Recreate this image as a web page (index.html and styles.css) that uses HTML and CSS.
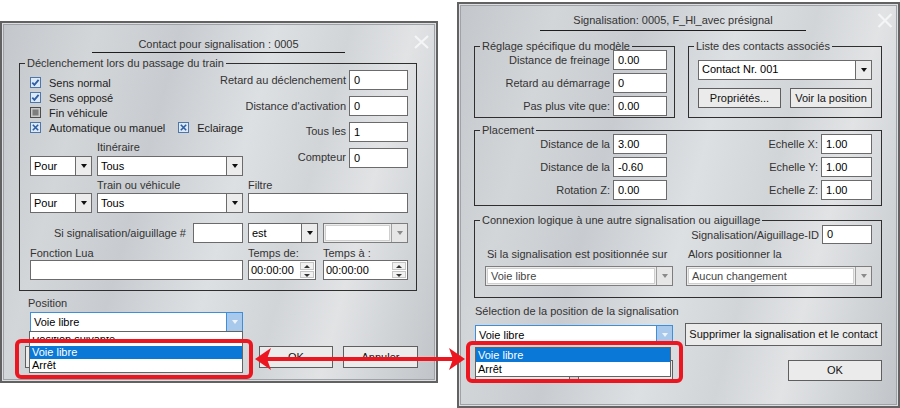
FILE: index.html
```html
<!DOCTYPE html>
<html lang="fr">
<head>
    <meta charset="UTF-8">
    <title>Contact pour signalisation</title>
    <link rel="stylesheet" href="styles.css">
</head>
<body>
    <!-- fenêtre de gauche : contact -->
    <div class="dlg dlg_contact">
        <div class="dlg_title">Contact pour signalisation : 0005</div>
        <svg class="close" width="17" height="14" viewBox="0 0 17 14"><path d="M2 1L15 13M15 1L2 13" stroke="#f4f5f6" stroke-width="2.2" fill="none"/></svg>

        <fieldset class="grp g_trigger">
            <legend>Déclenchement lors du passage du train</legend>
            <div class="trig_in">
                <div class="trig_top">
                    <div class="trig_left">
                        <div class="checks">
                            <div class="chk">
                                <svg width="11" height="11"><rect x=".5" y=".5" width="10" height="10" fill="#dce9f7" stroke="#4f76ab"/><path d="M2.3 5.6l2.1 2.2 4.2-5" stroke="#2d5ea6" stroke-width="1.8" fill="none"/></svg>
                                <span>Sens normal</span>
                            </div>
                            <div class="chk">
                                <svg width="11" height="11"><rect x=".5" y=".5" width="10" height="10" fill="#dce9f7" stroke="#4f76ab"/><path d="M2.3 5.6l2.1 2.2 4.2-5" stroke="#2d5ea6" stroke-width="1.8" fill="none"/></svg>
                                <span>Sens opposé</span>
                            </div>
                            <div class="chk">
                                <svg width="11" height="11"><rect x=".5" y=".5" width="10" height="10" fill="#c9c9c9" stroke="#4c4c4c"/><rect x="2.5" y="2.5" width="6" height="6" fill="#7d7d7d"/></svg>
                                <span>Fin véhicule</span>
                            </div>
                            <div class="chk_row">
                                <div class="chk chk_wide">
                                    <svg width="11" height="11"><rect x=".5" y=".5" width="10" height="10" fill="#dce9f7" stroke="#4f76ab"/><path d="M2.8 2.8l5.4 5.4M8.2 2.8l-5.4 5.4" stroke="#2d5ea6" stroke-width="1.6" fill="none"/></svg>
                                    <span>Automatique ou manuel</span>
                                </div>
                                <div class="chk">
                                    <svg width="11" height="11"><rect x=".5" y=".5" width="10" height="10" fill="#dce9f7" stroke="#4f76ab"/><path d="M2.8 2.8l5.4 5.4M8.2 2.8l-5.4 5.4" stroke="#2d5ea6" stroke-width="1.6" fill="none"/></svg>
                                    <span>Eclairage</span>
                                </div>
                            </div>
                        </div>
                        <div class="lbl lbl_itin">Itinéraire</div>
                        <div class="pair">
                            <div class="combo w62"><span class="val">Pour</span><span class="drop"><i class="tri"></i></span></div>
                            <div class="combo w146"><span class="val">Tous</span><span class="drop"><i class="tri"></i></span></div>
                        </div>
                    </div>
                    <div class="trig_right">
                        <div class="frow"><span>Retard au déclenchement</span><div class="edit w59">0</div></div>
                        <div class="frow"><span>Distance d'activation</span><div class="edit w59">0</div></div>
                        <div class="frow"><span class="lbl_up">Tous les</span><div class="edit w59">1</div></div>
                        <div class="frow"><span class="lbl_up">Compteur</span><div class="edit w59">0</div></div>
                    </div>
                </div>

                <div class="trig_grid">
                    <div class="lbl c2">Train ou véhicule</div>
                    <div class="lbl c34">Filtre</div>

                    <div class="combo"><span class="val">Pour</span><span class="drop"><i class="tri"></i></span></div>
                    <div class="combo"><span class="val">Tous</span><span class="drop"><i class="tri"></i></span></div>
                    <div class="edit c34"></div>

                    <div class="frow c12 frow_end"><span>Si signalisation/aiguillage #</span><div class="edit w50 gap7"></div></div>
                    <div class="combo"><span class="val">est</span><span class="drop"><i class="tri"></i></span></div>
                    <div class="combo off"><span class="val"></span><span class="drop"><i class="tri"></i></span></div>

                    <div class="lbl c12">Fonction Lua</div>
                    <div class="lbl">Temps de:</div>
                    <div class="lbl">Temps à :</div>

                    <div class="edit c12"></div>
                    <div class="spin w68"><span class="val">00:00:00</span><span class="arrows"><i class="up"></i><i class="dn"></i></span></div>
                    <div class="spin"><span class="val">00:00:00</span><span class="arrows"><i class="up"></i><i class="dn"></i></span></div>
                </div>
            </div>
        </fieldset>

        <div class="lbl pos_lbl">Position</div>
        <div class="combo focus pos_combo"><span class="val">Voie libre</span><span class="drop"><i class="tri"></i></span></div>

        <div class="btn_row">
            <div class="btn b_hidden"></div>
            <div class="btn b_ok">OK</div>
            <div class="btn b_cancel">Annuler</div>
        </div>

        <div class="droplist dl_contact">
            <div class="item cut"><span>Position suivante</span></div>
            <div class="item sel">Voie libre</div>
            <div class="item">Arrêt</div>
        </div>
    </div>

    <!-- fenêtre de droite : signalisation -->
    <div class="dlg dlg_signal">
        <div class="dlg_title">Signalisation: 0005, F_Hl_avec présignal</div>
        <svg class="close" width="16" height="15" viewBox="0 0 16 15"><path d="M1.5 1L14.5 14M14.5 1L1.5 14" stroke="#f4f5f6" stroke-width="2.2" fill="none"/></svg>

        <div class="sig_top">
            <fieldset class="grp g_model">
                <legend>Réglage spécifique du modèle</legend>
                <div class="rows r_model">
                    <div class="frow"><span>Distance de freinage</span><div class="edit w54">0.00</div></div>
                    <div class="frow"><span>Retard au démarrage</span><div class="edit w54">0</div></div>
                    <div class="frow"><span>Pas plus vite que:</span><div class="edit w54">0.00</div></div>
                </div>
            </fieldset>
            <fieldset class="grp g_list">
                <legend>Liste des contacts associés</legend>
                <div class="list_in">
                    <div class="combo h19 w174"><span class="val">Contact Nr. 001</span><span class="drop"><i class="tri"></i></span></div>
                    <div class="btn_pair">
                        <div class="btn b_props">Propriétés...</div>
                        <div class="btn b_view">Voir la position</div>
                    </div>
                </div>
            </fieldset>
        </div>

        <fieldset class="grp g_place">
            <legend>Placement</legend>
            <div class="place_in">
                <div class="rows r_place_l">
                    <div class="frow"><span>Distance de la</span><div class="edit w54">3.00</div></div>
                    <div class="frow"><span>Distance de la</span><div class="edit w54">-0.60</div></div>
                    <div class="frow"><span>Rotation Z:</span><div class="edit w54">0.00</div></div>
                </div>
                <div class="rows r_place_r">
                    <div class="frow"><span>Echelle X:</span><div class="edit w51">1.00</div></div>
                    <div class="frow"><span>Echelle Y:</span><div class="edit w51">1.00</div></div>
                    <div class="frow"><span>Echelle Z:</span><div class="edit w51">1.00</div></div>
                </div>
            </div>
        </fieldset>

        <fieldset class="grp g_link">
            <legend>Connexion logique à une autre signalisation ou aiguillage</legend>
            <div class="link_in">
                <div class="frow frow_end"><span>Signalisation/Aiguillage-ID</span><div class="edit h19 w50">0</div></div>
                <div class="link_grid">
                    <div class="lbl">Si la signalisation est positionnée sur</div>
                    <div class="lbl">Alors positionner la</div>
                    <div class="combo off h19"><span class="val">Voie libre</span><span class="drop"><i class="tri"></i></span></div>
                    <div class="combo off h19"><span class="val">Aucun changement</span><span class="drop"><i class="tri"></i></span></div>
                </div>
            </div>
        </fieldset>

        <div class="sel_row">
            <div class="sel_col">
                <div class="lbl">Sélection de la position de la signalisation</div>
                <div class="combo focus"><span class="val">Voie libre</span><span class="drop"><i class="tri"></i></span></div>
            </div>
            <div class="btn b_del">Supprimer la signalisation et le contact</div>
        </div>

        <div class="btn_row2">
            <div class="btn b_w95"></div>
            <div class="btn b_w95"></div>
            <div class="btn b_ok2">OK</div>
        </div>

        <div class="droplist dl_signal">
            <div class="item sel">Voie libre</div>
            <div class="item">Arrêt</div>
        </div>
    </div>

    <!-- marquage rouge -->
    <div class="mark mark_l"></div>
    <div class="mark mark_r"></div>
    <svg class="arrow" width="220" height="28" viewBox="0 0 220 28">
        <path d="M14 12H206V16H14z" fill="#ec1620"/>
        <path d="M3 14L19 3L15 14L19 25z" fill="#ec1620"/>
        <path d="M213 14L197 3L201 14L197 25z" fill="#ec1620"/>
    </svg>
</body>
</html>
```

FILE: styles.css
```css
* {
    box-sizing: border-box;
}
body {
    margin: 0;
    width: 900px;
    height: 408px;
    position: relative;
    overflow: hidden;
    background: #fff;
    font-family: "Liberation Sans", Arial, sans-serif;
    font-size: 11px;
    color: #333;
}

/* fenêtres */
.dlg {
    position: absolute;
    border: 2px solid #626262;
    box-shadow: inset 0 0 0 1px #dcdee0, inset 0 0 0 2px #9ea2a6;
    background: linear-gradient(105deg, #c3c7cb 0%, #d3d6d9 18%, #c8ccd0 34%, #dde0e3 52%, #d2d5d8 66%, #e1e3e5 78%, #c0c4c8 100%);
}
.dlg_contact {
    left: 0;
    top: 21px;
    width: 438px;
    height: 362px;
    padding-top: 14px;
}
.dlg_signal {
    left: 457px;
    top: 2px;
    width: 443px;
    height: 406px;
    padding-top: 9px;
}
.dlg_title {
    line-height: 14px;
    border-bottom: 1px solid #1e1e1e;
    text-align: center;
    white-space: nowrap;
}
.dlg_contact .dlg_title {
    width: 253px;
    margin-left: 90px;
    padding-bottom: 1px;
}
.dlg_signal .dlg_title {
    width: 266px;
    margin-left: 81px;
    padding-bottom: 3px;
}
.close {
    position: absolute;
}
.dlg_contact .close {
    left: 411px;
    top: 12px;
}
.dlg_signal .close {
    left: 418px;
    top: 9px;
}

/* groupes */
fieldset.grp {
    margin: 0;
    padding: 0;
    min-width: 0;
    border: 1px solid #2f2f2f;
}
.grp legend {
    margin-left: 5px;
    padding: 0 2px;
    line-height: 12px;
    white-space: nowrap;
}
.lbl {
    height: 14px;
    line-height: 14px;
    white-space: nowrap;
}

/* champs */
.edit {
    height: 20px;
    line-height: 18px;
    padding-left: 4px;
    background: #fff;
    border: 1px solid #6b6b6b;
    color: #000;
}
.h19 { height: 19px; line-height: 17px; }
.w50 { width: 50px; }
.w51 { width: 51px; }
.w54 { width: 54px; }
.w59 { width: 59px; }
.w62 { width: 62px; }
.w68 { width: 68px; }
.w146 { width: 146px; }
.w174 { width: 174px; }

.combo {
    display: flex;
    height: 20px;
    background: #fff;
    border: 1px solid #6b6b6b;
    color: #000;
}
.combo .val {
    flex: 1;
    padding-left: 3px;
    line-height: 18px;
    white-space: nowrap;
    overflow: hidden;
}
.combo.h19 .val {
    line-height: 17px;
}
.combo .drop {
    width: 16px;
    border-left: 1px solid #6b6b6b;
    background: #ececec;
    display: flex;
    align-items: center;
    justify-content: center;
}
.tri {
    width: 0;
    height: 0;
    border-left: 3.5px solid transparent;
    border-right: 3.5px solid transparent;
    border-top: 4px solid #111;
}
.combo.off {
    background: #ececec;
    border-color: #7d7d7d;
    color: #444;
}
.combo.off .val {
    margin: 1px;
    background: #fff;
    border: 1px solid #cfcfcf;
    line-height: 14px;
}
.combo.off .drop {
    border-left-color: #a0a0a0;
    background: #e6e6e6;
}
.combo.off .tri {
    border-top-color: #8a8a8a;
}
.combo.focus {
    border-color: #3d8fdc;
}
.combo.focus .drop {
    border-left-color: #3d8fdc;
    background: #a8c9ec;
}
.combo.focus .tri {
    border-top-color: #eef3f8;
}

.spin {
    display: flex;
    height: 20px;
    background: #fff;
    border: 1px solid #6b6b6b;
    color: #000;
}
.spin .val {
    flex: 1;
    padding-left: 2px;
    line-height: 18px;
}
.spin .arrows {
    width: 15px;
    display: flex;
    flex-direction: column;
    gap: 1px;
    padding: 1px 1px 1px 0;
}
.spin .arrows i {
    flex: 1;
    border: 1px solid #c4c4c4;
    background: #f1f1f1;
    position: relative;
}
.spin .arrows i::after {
    content: "";
    position: absolute;
    left: 3px;
    top: 2px;
    border-left: 3px solid transparent;
    border-right: 3px solid transparent;
}
.spin .up::after {
    border-bottom: 3px solid #333;
}
.spin .dn::after {
    border-top: 3px solid #333;
}

.btn {
    height: 22px;
    line-height: 20px;
    text-align: center;
    background: #ebebeb;
    border: 1px solid #5f5f5f;
    color: #111;
    white-space: nowrap;
}

.frow {
    display: flex;
    align-items: center;
    white-space: nowrap;
}
.frow .edit {
    margin-left: 3px;
    flex-shrink: 0;
}
.frow_end {
    justify-content: flex-end;
}

/* case à cocher */
.checks {
    padding-top: 5px;
}
.chk {
    display: flex;
    align-items: center;
    height: 15px;
    color: #222;
    white-space: nowrap;
}
.chk svg {
    margin-right: 8px;
    flex-shrink: 0;
}
.chk_row {
    display: flex;
}
.chk_wide {
    width: 160px;
}

/* groupe déclenchement */
.g_trigger {
    width: 398px;
    margin: 4px 0 0 17px !important;
}
.trig_in {
    padding: 1px 8px 10px 10px;
}
.trig_top {
    display: flex;
}
.trig_left {
    width: 213px;
    flex-shrink: 0;
}
.lbl_itin {
    margin: 5px 0 2px 67px;
}
.pair {
    display: flex;
    gap: 5px;
}
.trig_right {
    flex: 1;
    min-width: 0;
    display: flex;
    flex-direction: column;
    align-items: flex-end;
    gap: 6px;
}
.lbl_up {
    margin-bottom: 3px;
}
.trig_grid {
    display: grid;
    grid-template-columns: 62px 146px 70px 85px;
    grid-template-rows: 16px 21px 30px 17px 20px;
    column-gap: 5px;
    align-items: end;
}
.c2 { grid-column: 2; }
.c34 { grid-column: 3 / 5; }
.c12 { grid-column: 1 / 3; }
.frow .gap7 {
    margin-left: 7px;
}

.pos_lbl {
    margin: 5px 0 0 26px;
}
.pos_combo {
    width: 213px;
    margin: 2px 0 0 28px;
}
.btn_row {
    display: flex;
    margin: 14px 0 0 23px;
}
.b_hidden {
    width: 215px;
}
.b_ok {
    width: 74px;
    margin-left: 19px;
}
.b_cancel {
    width: 75px;
    margin-left: 10px;
}

/* liste déroulante */
.droplist {
    position: absolute;
    background: #fff;
    border: 1px solid #646464;
    color: #000;
}
.droplist .item {
    height: 13px;
    line-height: 13px;
    padding-left: 2px;
    white-space: nowrap;
}
.droplist .sel {
    background: #0a78d7;
    color: #fff;
}
.droplist .cut {
    height: 14px;
    line-height: 14px;
}
.droplist .cut span {
    display: block;
    clip-path: inset(5px 0 0 0);
}
.dl_contact {
    left: 27px;
    top: 308px;
    width: 214px;
}
.dl_signal {
    left: 16px;
    top: 343px;
    width: 196px;
}
.dl_signal .item {
    height: 14px;
    line-height: 14px;
}

/* fenêtre signalisation */
.sig_top {
    display: flex;
    margin: 9px 0 0 15px;
}
.g_model {
    width: 201px;
}
.r_model {
    margin-top: -2px;
    padding: 0 7px 1px 0;
    display: flex;
    flex-direction: column;
    align-items: flex-end;
    gap: 4.5px;
}
.g_list {
    width: 194px;
    margin-left: 13px !important;
}
.list_in {
    padding: 8px 0 0 9px;
}
.btn_pair {
    display: flex;
    gap: 9px;
    margin-top: 8px;
}
.btn_pair .btn {
    height: 20px;
    line-height: 18px;
}
.b_props {
    width: 83px;
}
.b_view {
    width: 82px;
}

.g_place {
    width: 408px;
    margin: 6px 0 0 15px !important;
}
.place_in {
    display: flex;
    justify-content: space-between;
    margin-top: -2px;
    padding: 0 9px 5px 0;
}
.rows {
    display: flex;
    flex-direction: column;
    align-items: flex-end;
    gap: 3px;
}
.r_place_l {
    width: 192px;
}

.g_link {
    width: 408px;
    margin: 8px 0 0 15px !important;
}
.link_in {
    margin-top: -1px;
    padding: 0 9px 11px 10px;
}
.link_grid {
    display: grid;
    grid-template-columns: 188px 186px;
    column-gap: 13px;
    row-gap: 5px;
    margin-top: 3px;
}
.link_grid .lbl {
    padding-left: 2px;
}

.sel_row {
    display: flex;
    align-items: flex-end;
    margin: 7px 0 0 16px;
}
.sel_col {
    width: 198px;
    flex-shrink: 0;
}
.sel_col .lbl {
    height: 13px;
    line-height: 13px;
    margin-bottom: 7px;
}
.b_del {
    width: 197px;
    height: 23px;
    line-height: 21px;
    margin: 0 0 -1px 12px;
}
.btn_row2 {
    display: flex;
    gap: 8px;
    margin: 15px 16px 0 16px;
}
.btn_row2 .btn {
    height: 21px;
    line-height: 19px;
}
.b_w95 {
    width: 95px;
}
.b_ok2 {
    width: 94px;
    margin-left: auto;
}

/* repères rouges */
.mark {
    position: absolute;
    border: 4px solid #ec1620;
    border-radius: 6px;
}
.mark_l {
    left: 15px;
    top: 339px;
    width: 238px;
    height: 40px;
}
.mark_r {
    left: 466px;
    top: 341px;
    width: 217px;
    height: 42px;
}
.arrow {
    position: absolute;
    left: 252px;
    top: 345px;
}
```
